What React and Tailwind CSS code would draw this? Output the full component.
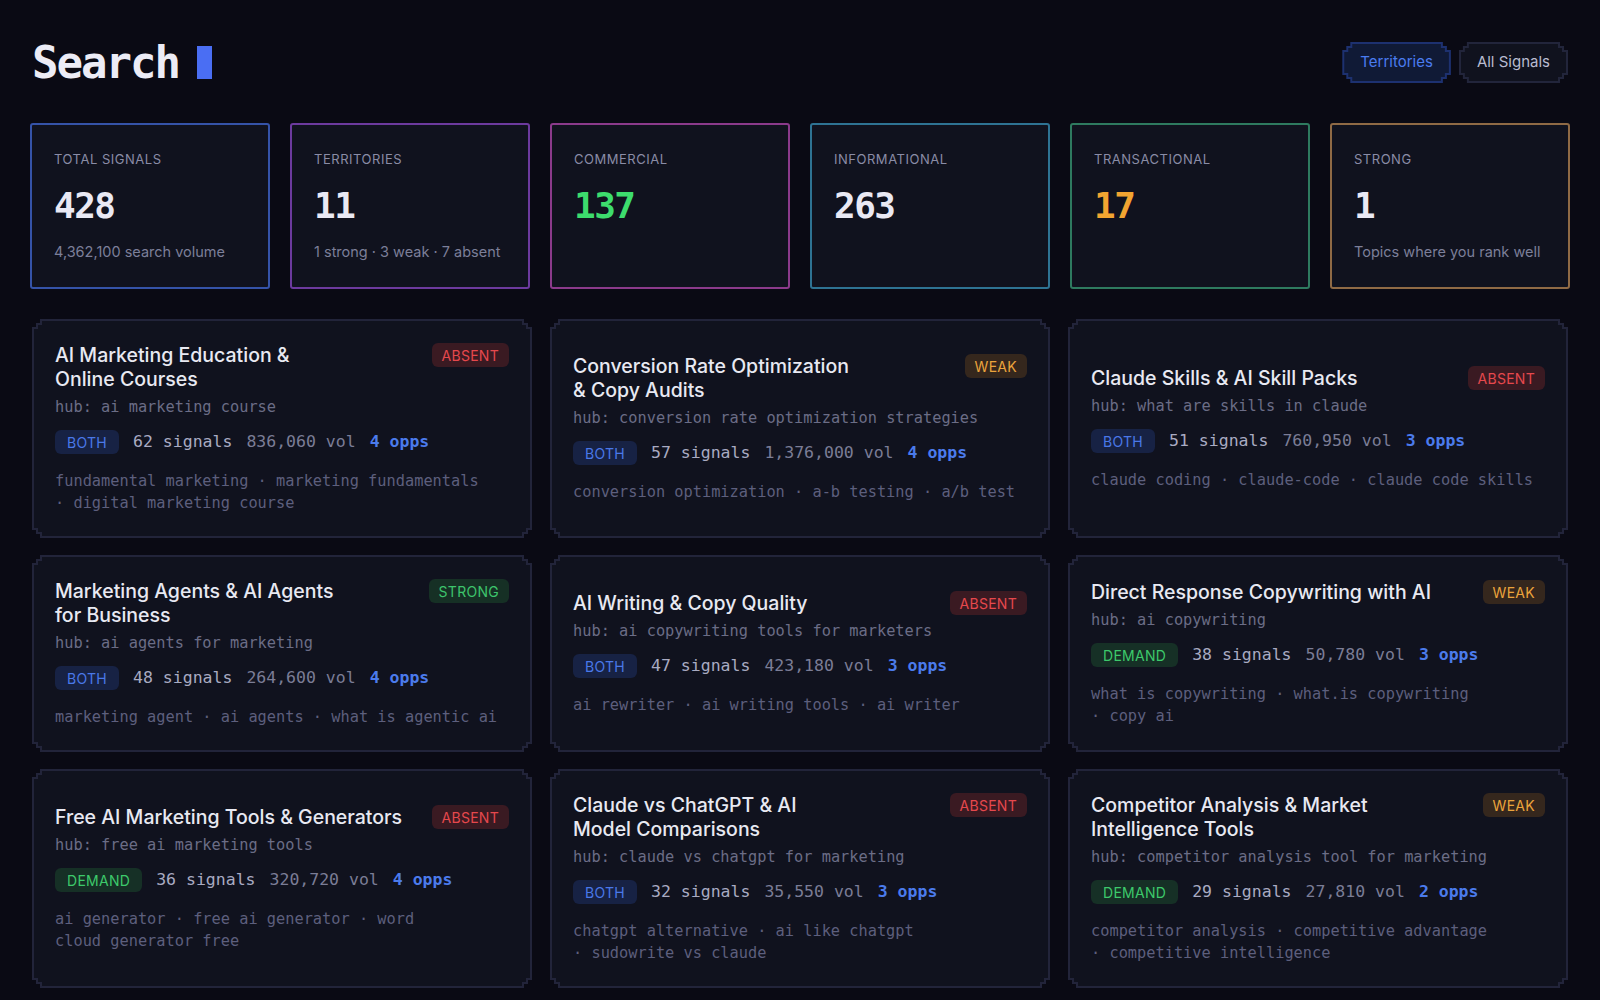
import React from "react";

// stepped "pixel" corners shared by cards and buttons
const pixelClip =
  "[clip-path:polygon(8px_0,calc(100%_-_8px)_0,calc(100%_-_8px)_4px,calc(100%_-_4px)_4px,calc(100%_-_4px)_8px,100%_8px,100%_calc(100%_-_8px),calc(100%_-_4px)_calc(100%_-_8px),calc(100%_-_4px)_calc(100%_-_4px),calc(100%_-_8px)_calc(100%_-_4px),calc(100%_-_8px)_100%,8px_100%,8px_calc(100%_-_4px),4px_calc(100%_-_4px),4px_calc(100%_-_8px),0_calc(100%_-_8px),0_8px,4px_8px,4px_4px,8px_4px)]";

const pixelFont = "font-['DejaVu_Sans_Mono',monospace]";
const monoFont = "font-['DejaVu_Sans_Mono','Liberation_Mono',monospace]";

const stats = [
  { label: "Total Signals", value: "428", sub: "4,362,100 search volume", border: "border-[#3553a8]", color: "text-[#e9e9f4]" },
  { label: "Territories", value: "11", sub: "1 strong · 3 weak · 7 absent", border: "border-[#6c3a9e]", color: "text-[#e9e9f4]" },
  { label: "Commercial", value: "137", sub: "", border: "border-[#8b3a8b]", color: "text-[#3ddc6d]" },
  { label: "Informational", value: "263", sub: "", border: "border-[#2e7393]", color: "text-[#e9e9f4]" },
  { label: "Transactional", value: "17", sub: "", border: "border-[#2e7a5f]", color: "text-[#f2a531]" },
  { label: "Strong", value: "1", sub: "Topics where you rank well", border: "border-[#8f6a45]", color: "text-[#e9e9f4]" },
];

const statusStyles = {
  ABSENT: "bg-[#3a1a22] text-[#e5484d]",
  WEAK: "bg-[#35271d] text-[#eba43c]",
  STRONG: "bg-[#163025] text-[#3dc46c]",
};

const intentStyles = {
  BOTH: "bg-[#172244] text-[#4a78e8]",
  DEMAND: "bg-[#163026] text-[#3dc96b]",
};

// titles and keyword lists carry their own line breaks
const territories = [
  { title: "AI Marketing Education &\nOnline Courses", status: "ABSENT", hub: "ai marketing course", intent: "BOTH", signals: 62, vol: "836,060", opps: 4, keywords: "fundamental marketing · marketing fundamentals\n· digital marketing course" },
  { title: "Conversion Rate Optimization\n& Copy Audits", status: "WEAK", hub: "conversion rate optimization strategies", intent: "BOTH", signals: 57, vol: "1,376,000", opps: 4, keywords: "conversion optimization · a-b testing · a/b test" },
  { title: "Claude Skills & AI Skill Packs", status: "ABSENT", hub: "what are skills in claude", intent: "BOTH", signals: 51, vol: "760,950", opps: 3, keywords: "claude coding · claude-code · claude code skills" },
  { title: "Marketing Agents & AI Agents\nfor Business", status: "STRONG", hub: "ai agents for marketing", intent: "BOTH", signals: 48, vol: "264,600", opps: 4, keywords: "marketing agent · ai agents · what is agentic ai" },
  { title: "AI Writing & Copy Quality", status: "ABSENT", hub: "ai copywriting tools for marketers", intent: "BOTH", signals: 47, vol: "423,180", opps: 3, keywords: "ai rewriter · ai writing tools · ai writer" },
  { title: "Direct Response Copywriting with AI", status: "WEAK", hub: "ai copywriting", intent: "DEMAND", signals: 38, vol: "50,780", opps: 3, keywords: "what is copywriting · what.is copywriting\n· copy ai" },
  { title: "Free AI Marketing Tools & Generators", status: "ABSENT", hub: "free ai marketing tools", intent: "DEMAND", signals: 36, vol: "320,720", opps: 4, keywords: "ai generator · free ai generator · word\ncloud generator free" },
  { title: "Claude vs ChatGPT & AI\nModel Comparisons", status: "ABSENT", hub: "claude vs chatgpt for marketing", intent: "BOTH", signals: 32, vol: "35,550", opps: 3, keywords: "chatgpt alternative · ai like chatgpt\n· sudowrite vs claude" },
  { title: "Competitor Analysis & Market\nIntelligence Tools", status: "WEAK", hub: "competitor analysis tool for marketing", intent: "DEMAND", signals: 29, vol: "27,810", opps: 2, keywords: "competitor analysis · competitive advantage\n· competitive intelligence" },
];

const TabButton = ({ label, active }) => (
  <div className={`${pixelClip} p-[2px] ${active ? "bg-[#1d3170]" : "bg-[#22253b]"}`}>
    <div
      className={`${pixelClip} h-[37px] px-4 flex items-center text-[15px] ${
        active ? "bg-[#101a36] text-[#4a7cf0]" : "bg-[#10121e] text-[#b9bbd0]"
      }`}
    >
      {label}
    </div>
  </div>
);

const StatCard = ({ label, value, sub, border, color }) => (
  <div className={`border-2 ${border} rounded-[3px] bg-[#10121e] px-[22px] pt-[25px] pb-[25px]`}>
    <div className="text-[13px] leading-[18px] uppercase tracking-[0.04em] text-[#8a8ca6]">{label}</div>
    <div className={`${pixelFont} ${color} mt-[18px] text-[36px] leading-10 font-bold tracking-[-1.5px]`}>{value}</div>
    {sub && <div className="mt-4 text-[14.5px] leading-5 text-[#7c7f99]">{sub}</div>}
  </div>
);

const TerritoryCard = ({ t }) => (
  <div className={`${pixelClip} p-[2px] bg-[#22243a]`}>
    <div className={`${pixelClip} h-full bg-[#10121e] px-[21px] py-[22px] flex flex-col justify-center`}>
      <div className="flex items-start justify-between gap-4">
        <div className="text-[19.5px] leading-6 font-medium text-[#e8e9f2] whitespace-pre-line">{t.title}</div>
        <span className={`shrink-0 h-6 px-2.5 rounded-md flex items-center text-[14px] tracking-[0.02em] ${statusStyles[t.status]}`}>
          {t.status}
        </span>
      </div>
      <div className={`${monoFont} mt-1.5 text-[15.3px] leading-5 text-[#6b6d86]`}>hub: {t.hub}</div>
      <div className={`${monoFont} mt-[13px] h-6 flex items-center gap-[14px] text-[16.5px]`}>
        <span className={`h-6 px-3 rounded-md flex items-center font-['Inter',sans-serif] text-[14px] tracking-[0.02em] ${intentStyles[t.intent]}`}>
          {t.intent}
        </span>
        <span className="text-[#a9abc2]">{t.signals} signals</span>
        <span className="text-[#7b7d96]">{t.vol} vol</span>
        <span className="text-[#4b7bec] font-bold">{t.opps} opps</span>
      </div>
      <div className={`${monoFont} mt-4 text-[15.3px] leading-[22px] text-[#5d5f7d] whitespace-pre-line`}>
        {t.keywords}
      </div>
    </div>
  </div>
);

export default function App() {
  return (
    <div className="min-h-screen bg-[#0a0a14] px-8 pt-[42px] pb-8 font-['Inter',sans-serif]">
      <div className="h-[41px] flex items-center justify-between">
        <div className="flex items-center gap-[18px]">
          <h1 className={`${pixelFont} text-[44px] leading-none font-bold tracking-[-2px] text-[#ececf6]`}>Search</h1>
          <span className="w-[15px] h-[33px] bg-[#4a6ef3]" />
        </div>
        <div className="flex items-center gap-2">
          <TabButton label="Territories" active />
          <TabButton label="All Signals" />
        </div>
      </div>

      <div className="mt-10 -mx-[2px] grid grid-cols-6 gap-5">
        {stats.map((s) => (
          <StatCard key={s.label} {...s} />
        ))}
      </div>

      <div className="mt-[30px] grid grid-cols-3 gap-x-[18px] gap-y-[17px]">
        {territories.map((t) => (
          <TerritoryCard key={t.title} t={t} />
        ))}
      </div>
    </div>
  );
}
